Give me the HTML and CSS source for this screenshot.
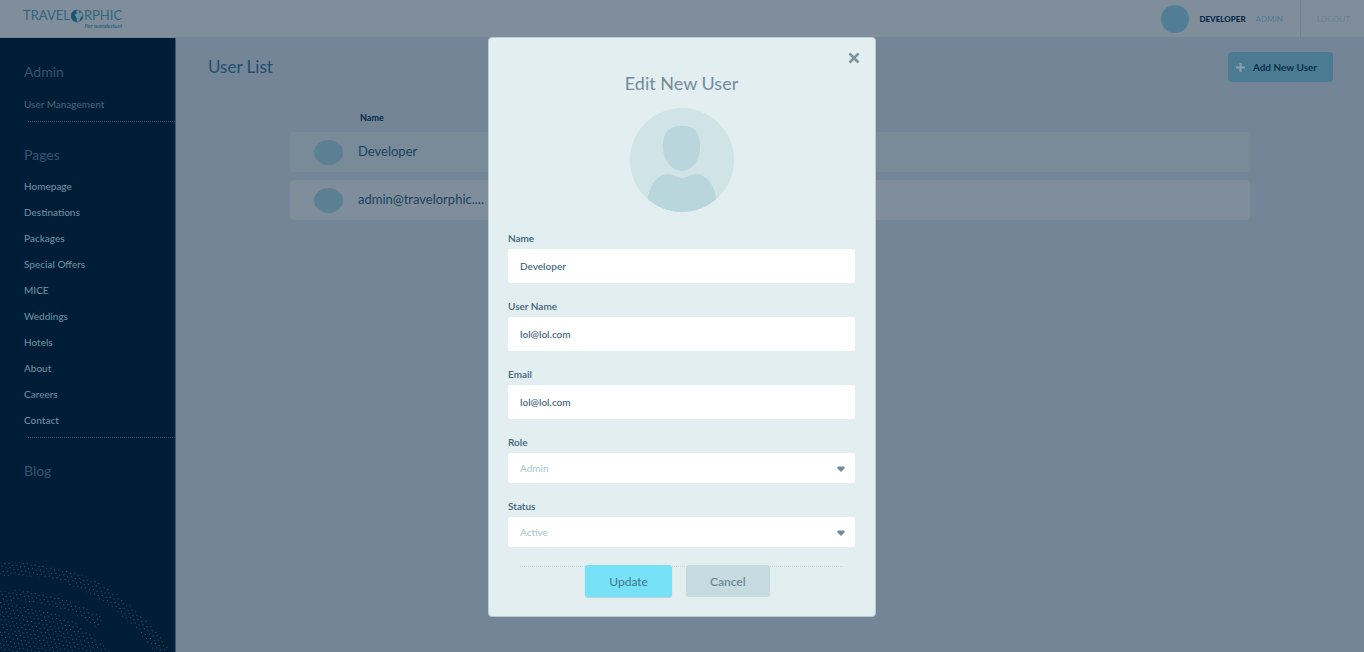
FILE: index.html
```html
<!DOCTYPE html>
<html lang="en">
<head>
<meta charset="utf-8">
<meta name="viewport" content="width=device-width, initial-scale=1">
<title>Travelorphic – User List</title>
<link rel="stylesheet" href="styles.css">
</head>
<body>
<div class="app">
  <header class="topbar">
    <a class="logo" href="#" aria-label="Travelorphic">
      <span class="logo-word">TRAVEL<svg class="globe" viewBox="0 0 14 14" aria-hidden="true"><circle cx="7" cy="7" r="6" fill="#6f8c9d" stroke="#3d728c" stroke-width="1"/><path d="M1.5 4 L5 1 L7 1.5 L6 3 L7 4 L4.5 6 L6.5 8.5 L7 13 L3 11.5 L1 8Z M9 1.5 L11 3 L9.5 4.5Z M11 8 L13 7 L12 10.5 L9 12.5Z" fill="#1f4f6d"/></svg>RPHIC</span>
      <span class="logo-tag">For wanderlust</span>
    </a>
    <div class="account">
      <span class="avatar avatar-top"></span>
      <strong class="account-name">DEVELOPER</strong>
      <span class="account-role">ADMIN</span>
      <a class="logout" href="#">LOGOUT</a>
    </div>
  </header>
  <div class="body">
    <nav class="sidebar">
      <h2 class="group-title">Admin</h2>
      <a class="nav-link nav-muted" href="#">User Management</a>
      <hr class="nav-rule">
      <h2 class="group-title">Pages</h2>
      <ul class="nav-list">
        <li><a class="nav-link" href="#">Homepage</a></li>
        <li><a class="nav-link" href="#">Destinations</a></li>
        <li><a class="nav-link" href="#">Packages</a></li>
        <li><a class="nav-link" href="#">Special Offers</a></li>
        <li><a class="nav-link" href="#">MICE</a></li>
        <li><a class="nav-link" href="#">Weddings</a></li>
        <li><a class="nav-link" href="#">Hotels</a></li>
        <li><a class="nav-link" href="#">About</a></li>
        <li><a class="nav-link" href="#">Careers</a></li>
        <li><a class="nav-link" href="#">Contact</a></li>
      </ul>
      <hr class="nav-rule">
      <h2 class="group-title">Blog</h2>
      <svg class="rings" viewBox="0 0 175 92" aria-hidden="true">
        <defs>
          <pattern id="dots" width="8" height="8" patternUnits="userSpaceOnUse" patternTransform="rotate(12)">
            <path d="M1 1h1v1h-1z M5 2h1v1h-1z M3 5h1v1h-1z M7 6h1v1h-1z" fill="#355a76"/>
          </pattern>
        </defs>
        <path d="M0 9 C70 5 122 34 163 92" fill="none" stroke="url(#dots)" stroke-width="14"/>
        <path d="M0 37 C40 32 75 45 100 63" fill="none" stroke="url(#dots)" stroke-width="11"/>
        <path d="M0 42 C50 46 85 62 110 92 H0Z" fill="url(#dots)"/>
      </svg>
    </nav>
    <main class="main">
      <div class="page-head">
        <h1 class="page-title">User List</h1>
        <button class="add-btn" type="button">
          <svg class="plus" viewBox="0 0 9 9" aria-hidden="true"><path d="M3.5 0h2v3.5H9v2H5.5V9h-2V5.5H0v-2h3.5z" fill="#8fa0ad"/></svg>
          Add New User
        </button>
      </div>
      <table class="users">
        <thead><tr><th class="col-avatar" aria-label="Photo"></th><th>Name</th></tr></thead>
        <tbody>
          <tr class="row-active"><td class="col-avatar"><span class="avatar avatar-row"></span></td><td class="user-name">Developer</td></tr>
          <tr><td class="col-avatar"><span class="avatar avatar-row"></span></td><td class="user-name">admin@travelorphic....</td></tr>
        </tbody>
      </table>
    </main>
  </div>
</div>

<div class="overlay">
  <form class="modal" role="dialog" aria-labelledby="modal-title">
    <button class="close" type="button" aria-label="Close">
      <svg viewBox="0 0 12 12" aria-hidden="true"><path d="M1.5 1.5 L10.5 10.5 M10.5 1.5 L1.5 10.5" stroke="#7f92a0" stroke-width="2.6"/></svg>
    </button>
    <h2 class="modal-title" id="modal-title">Edit New User</h2>
    <svg class="portrait" viewBox="0 0 104 104" aria-hidden="true">
      <clipPath id="disc"><circle cx="52" cy="52" r="52"/></clipPath>
      <g clip-path="url(#disc)">
        <rect width="104" height="104" fill="#d0e3e7"/>
        <path d="M52 18 C65 17 71 26 70 41 C69 54 61 63 52 63 C43 63 34 54 33 41 C32 26 39 17 52 18Z" fill="#b9d6dc"/>
        <path d="M17 104 C16 80 26 66 39 66 C45 67 48 70 52 70 C56 70 59 67 65 66 C78 66 88 80 87 104Z" fill="#b9d6dc"/>
      </g>
    </svg>
    <div class="field"><label for="name">Name</label><input id="name" type="text" value="Developer"></div>
    <div class="field"><label for="username">User Name</label><input id="username" type="text" value="lol@lol.com"></div>
    <div class="field"><label for="email">Email</label><input id="email" type="email" value="lol@lol.com"></div>
    <div class="field"><label for="role">Role</label>
      <div class="select-wrap"><select id="role"><option>Admin</option></select><svg class="caret" viewBox="0 0 8 6" aria-hidden="true"><path d="M1 0.5h6l1 1.5-4 4-4-4z" fill="#738b9b"/></svg></div>
    </div>
    <div class="field"><label for="status">Status</label>
      <div class="select-wrap"><select id="status"><option>Active</option></select><svg class="caret" viewBox="0 0 8 6" aria-hidden="true"><path d="M1 0.5h6l1 1.5-4 4-4-4z" fill="#738b9b"/></svg></div>
    </div>
    <div class="actions">
      <button class="btn btn-update" type="submit">Update</button>
      <button class="btn btn-cancel" type="button">Cancel</button>
    </div>
  </form>
</div>
</body>
</html>
```

FILE: styles.css
```css
* { box-sizing: border-box; }
body {
  margin: 0;
  font-family: Lato, "Liberation Sans", sans-serif;
  font-size: 10px;
  background: #738596;
  color: #062944;
}
h1, h2, ul { margin: 0; padding: 0; font-weight: 400; }
ul { list-style: none; }
a { color: inherit; text-decoration: none; }
button, input, select { font: inherit; color: inherit; border: 0; margin: 0; }

.app { min-height: 100vh; display: flex; flex-direction: column; }
.topbar {
  height: 38px;
  display: flex;
  justify-content: space-between;
  background: #808e9b;
  border-bottom: 1px solid #738596;
}
.logo { padding: 8px 0 0 23px; display: flex; flex-direction: column; color: #30637e; }
.logo-word { display: flex; align-items: center; font-size: 13px; line-height: 15px; }
.globe { width: 14px; height: 14px; }
.logo-tag { align-self: flex-end; font-size: 6px; line-height: 6px; font-style: italic; font-weight: 700; }
.account { display: flex; align-items: center; font-size: 8px; }
.avatar { display: block; border-radius: 50%; background: #527e95; }
.avatar-top { width: 28px; height: 28px; margin-right: 10px; }
.account-name { color: #062a46; font-weight: 900; }
.account-role { color: #4c7d94; margin: 0 17px 0 10px; }
.logout {
  align-self: stretch;
  display: flex;
  align-items: center;
  padding: 0 14px 0 16px;
  border-left: 1px solid #6b8496;
  color: #6c8191;
}

.body { flex: 1; display: flex; }
.sidebar {
  position: relative;
  width: 176px;
  flex: none;
  padding: 22px 0 0 24px;
  background: #001d37;
  border-right: 1px solid #315d79;
}
.group-title { font-size: 14px; line-height: 24px; color: #33566f; }
.nav-link { display: block; line-height: 26px; font-weight: 500; color: #6a8fa2; }
.nav-muted { margin-top: 7px; font-weight: 400; color: #47677f; }
.nav-rule { margin: 4px 0 21px 4px; border: 0; border-top: 1px dotted #33566f; }
.nav-list { margin-top: 6px; }
.rings { position: absolute; left: 0; bottom: 0; width: 100%; }

.main { flex: 1; }
.page-head { display: flex; justify-content: space-between; align-items: flex-start; padding: 14px 31px 0 32px; }
.page-title { font-size: 17px; line-height: 30px; color: #224f6c; }
.add-btn {
  height: 30px;
  padding: 0 16px 0 8px;
  display: flex;
  align-items: center;
  gap: 8px;
  border-radius: 4px;
  background: #4b7b92;
  font-weight: 600;
}
.plus { width: 9px; height: 9px; }
.users {
  width: calc(100% - 228px);
  margin: 22px auto 0;
  border-collapse: separate;
  border-spacing: 0 8px;
  font-size: 13px;
  color: #174361;
}
.users th { height: 12px; padding: 0 0 0 2px; text-align: left; font-size: 9px; line-height: 12px; color: #062a46; }
.users td { height: 40px; padding: 0; background: #808e9b; }
.users .row-active td { background: #798a99; }
.users td:first-child { border-radius: 4px 0 0 4px; padding-left: 24px; }
.users .user-name { border-radius: 0 4px 4px 0; padding-bottom: 3px; }
.users .col-avatar { width: 68px; }
.avatar-row { width: 29px; height: 25px; background: #5b7f93; }

.overlay { position: absolute; inset: 0; display: flex; justify-content: center; align-items: flex-start; padding-top: 37px; }
.modal {
  position: relative;
  width: 388px;
  max-width: 100%;
  padding: 34px 20px 19px 19px;
  display: flex;
  flex-direction: column;
  background: #e2eeef;
  border: 1px solid #b9cbd1;
  border-radius: 4px;
}
.close { position: absolute; top: 14px; right: 15px; width: 12px; height: 12px; padding: 0; background: none; display: flex; }
.modal-title { font-size: 18px; line-height: 22px; text-align: center; color: #738b9b; }
.portrait { width: 104px; height: 104px; margin: 14px auto 18px; align-self: center; }
.field { margin-bottom: 15px; display: flex; flex-direction: column; gap: 3px; }
.field label { font-size: 10px; line-height: 16px; font-weight: 600; color: #3f657c; }
.field input, .field select { width: 100%; padding: 0 12px; background: #fff; border-radius: 3px; display: block; }
.field input { height: 34px; color: #486c82; font-weight: 600; }
.select-wrap { position: relative; }
.field select { height: 30px; appearance: none; color: #a5c8d0; }
.caret { position: absolute; right: 10px; top: 13px; width: 8px; height: 6px; pointer-events: none; }
.actions {
  margin: 4px 12px 0;
  display: flex;
  justify-content: center;
  gap: 14px;
  padding-right: 8px;
  border-top: 1px dotted #bdd9de;
}
.btn { height: 32px; margin-top: -2px; padding: 0 24px; border-radius: 3px; font-size: 12px; }
.btn-update { background: #77e2f7; color: #3f748b; box-shadow: 0 1px 1px #b9cfd5; }
.btn-cancel { background: #c5dbe0; color: #6e8795; font-weight: 600; }
```
